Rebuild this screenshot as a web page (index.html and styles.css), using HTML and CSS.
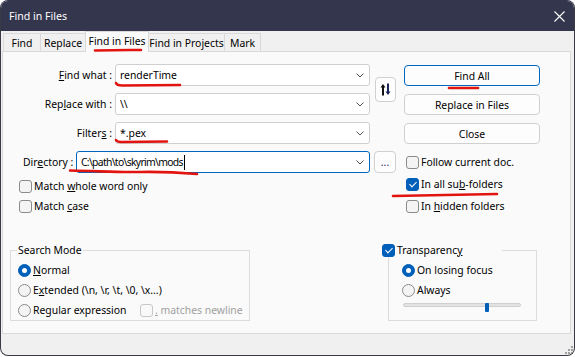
FILE: index.html
```html
<!DOCTYPE html>
<html>
<head>
<meta charset="utf-8">
<link rel="stylesheet" href="styles.css">
</head>
<body>
<div class="window">
  <div class="titlebar">
    <span class="title">Find in Files</span>
    <svg class="close" width="11" height="11" viewBox="0 0 11 11"><path d="M0.5 0.5 L10.5 10.5 M10.5 0.5 L0.5 10.5" stroke="#ffffff" stroke-width="1.1" fill="none"/></svg>
  </div>
  <div class="tabs">
    <div class="tab t-find">Find</div>
    <div class="tab t-replace">Replace</div>
    <div class="tab t-fif active">Find in Files</div>
    <div class="tab t-fip">Find in Projects</div>
    <div class="tab t-mark">Mark</div>
  </div>
  <div class="panel">
    <div class="form">
      <div class="lbl"><span><u>F</u>ind what :</span></div>
      <div class="combo"><span class="val">renderTime</span><svg class="chev" width="8" height="5" viewBox="0 0 8 5"><path d="M0.5 0.5 L4 4 L7.5 0.5" stroke="#505050" fill="none"/></svg></div>
      <button class="swap"><svg width="11" height="13" viewBox="0 0 11 13"><path d="M3 12.5 V2.5" stroke="#111" stroke-width="2" fill="none"/><path d="M0.5 4.5 L3 1 L5.5 4.5 Z" fill="#111"/><path d="M8 0.5 V10.5" stroke="#1b2459" stroke-width="2" fill="none"/><path d="M5.5 8.5 L8 12 L10.5 8.5 Z" fill="#1b2459"/></svg></button>
      <button class="btn default">Find All</button>

      <div class="lbl"><span>Rep<u>l</u>ace with :</span></div>
      <div class="combo"><span class="val">\\</span><svg class="chev" width="8" height="5" viewBox="0 0 8 5"><path d="M0.5 0.5 L4 4 L7.5 0.5" stroke="#505050" fill="none"/></svg></div>
      <button class="btn c4">Replace in Files</button>

      <div class="lbl"><span>Filter<u>s</u> :</span></div>
      <div class="combo"><span class="val">*.pex</span><svg class="chev" width="8" height="5" viewBox="0 0 8 5"><path d="M0.5 0.5 L4 4 L7.5 0.5" stroke="#505050" fill="none"/></svg></div>
      <button class="btn c4">Close</button>

      <div class="dir-row">
        <span class="dir-lbl">Dir<u>e</u>ctory :</span>
        <div class="combo focus"><span class="val path">C:\path\to\skyrim\mods</span><span class="caret"></span><svg class="chev" width="8" height="5" viewBox="0 0 8 5"><path d="M0.5 0.5 L4 4 L7.5 0.5" stroke="#505050" fill="none"/></svg></div>
      </div>
      <button class="dots">...</button>
      <label class="check follow"><span class="box"></span><span class="txt">Follow current doc.</span></label>
    </div>

    <div class="opts">
      <div class="opts-left">
        <label class="check"><span class="box"></span><span class="txt">Match <u>w</u>hole word only</span></label>
        <label class="check"><span class="box"></span><span class="txt">Match <u>c</u>ase</span></label>
      </div>
      <div class="opts-right">
        <label class="check"><span class="box on"></span><span class="txt">In all su<u>b</u>-folders</span></label>
        <label class="check"><span class="box"></span><span class="txt">In <u>h</u>idden folders</span></label>
      </div>
    </div>

    <div class="groups">
      <div class="group mode">
        <div class="group-title">Search Mode</div>
        <div class="group-body">
          <label class="radio"><span class="dot on"></span><span class="txt"><u>N</u>ormal</span></label>
          <label class="radio"><span class="dot"></span><span class="txt">E<u>x</u>tended (\n, \r, \t, \0, \x...)</span></label>
          <div class="radio-row">
            <label class="radio regex"><span class="dot"></span><span class="txt">Re<u>g</u>ular expression</span></label>
            <label class="check disabled"><span class="box"></span><span class="txt"><u>.</u> matches newline</span></label>
          </div>
        </div>
      </div>
      <div class="group trans">
        <div class="group-title trans-title"><label class="check"><span class="box on"></span><span class="txt">Transparenc<u>y</u></span></label></div>
        <div class="group-body trans-body">
          <label class="radio"><span class="dot on"></span><span class="txt">On losing focus</span></label>
          <label class="radio"><span class="dot"></span><span class="txt">Always</span></label>
          <div class="slider"><div class="track"></div><div class="thumb"></div></div>
        </div>
      </div>
    </div>
  </div>
  <div class="footer">
    <svg class="grip" width="10" height="10" viewBox="0 0 10 10"><g fill="#a0a0a0"><rect x="7" y="1" width="2" height="2"/><rect x="7" y="4" width="2" height="2"/><rect x="4" y="4" width="2" height="2"/><rect x="7" y="7" width="2" height="2"/><rect x="4" y="7" width="2" height="2"/><rect x="1" y="7" width="2" height="2"/></g></svg>
  </div>
  <svg class="marks" width="575" height="357" viewBox="0 0 575 357">
    <g stroke="#e2140f" stroke-width="2.6" stroke-linecap="round" fill="none">
      <path d="M95 50.5 Q118 49.8 141 50"/>
      <path d="M116 83 Q117 85.5 122 85.5 L180 85"/>
      <path d="M116 140 Q117 142 121 142 L167 141.5"/>
      <path d="M70 170.5 C100 171 115 172.5 140 172 S185 173 197 174"/>
      <path d="M449 88 L478 88"/>
      <path d="M393 196 Q440 195 497 194"/>
    </g>
  </svg>
</div>
</body>
</html>
```

FILE: styles.css
```css
* { box-sizing: border-box; }
html, body { margin: 0; padding: 0; }
body {
  width: 575px;
  height: 357px;
  background: #ffffff;
  font-family: "Noto Sans", "Open Sans", sans-serif;
  font-size: 10.4px;
  color: #000;
  overflow: hidden;
}
u { text-underline-offset: 1px; text-decoration-thickness: 1px; }
button { font: inherit; color: inherit; margin: 0; padding: 0; }
.txt { white-space: pre; }

.window {
  position: relative;
  width: 575px;
  height: 356px;
  border: 1px solid #3a3a44;
  border-top-color: #34364d;
  border-radius: 8px;
  overflow: hidden;
  background: #f0f0f0;
  display: flex;
  flex-direction: column;
}
.titlebar {
  height: 30px;
  flex: none;
  background: #34364d;
  color: #fff;
  display: flex;
  align-items: center;
  justify-content: space-between;
  padding: 0 9px 0 8px;
}
.title { line-height: 16px; font-size: 10.6px; }
.close { display: block; }

.tabs {
  height: 20px;
  flex: none;
  display: flex;
  align-items: flex-end;
  padding-left: 2px;
}
.tab {
  height: 18px;
  border: 1px solid #d9d9d9;
  border-bottom: none;
  background: #f0f0f0;
  margin-right: -1px;
  text-align: center;
  line-height: 18px;
  white-space: nowrap;
}
.t-find { width: 38px; }
.t-replace { width: 46px; }
.t-fif { width: 64px; }
.t-fip { width: 77px; }
.t-mark { width: 37px; }
.tab.active {
  height: 21px;
  margin-bottom: -1px;
  background: #fafafa;
  position: relative;
  z-index: 1;
  line-height: 18px;
}

.panel {
  flex: none;
  margin-left: 1px;
  width: 569px;
  height: 283px;
  border: 1px solid #d9d9d9;
  background: #fafafa;
}

.form {
  display: grid;
  grid-template-columns: 112px 255px 34px 136px;
  grid-auto-rows: 22px;
  row-gap: 7px;
  margin-top: 12px;
}
.lbl {
  display: flex;
  align-items: center;
  justify-content: flex-end;
  padding-right: 3px;
  white-space: pre;
}
.combo {
  display: flex;
  align-items: center;
  height: 22px;
  background: #fff;
  border: 1px solid #cfcfcf;
  border-radius: 3px;
  padding: 0 5px 0 4px;
}
.combo .val { flex: 1; white-space: nowrap; }
.combo.focus { border-color: #0067c0; }
.combo.focus .val { flex: none; }
.val.path { letter-spacing: -0.7px; }
.caret { width: 1px; height: 15px; background: #000; margin-left: 1px; }
.combo.focus .chev { margin-left: auto; }
.chev { display: block; flex: none; }

.swap {
  grid-column: 3;
  grid-row: 1 / 3;
  align-self: center;
  justify-self: start;
  margin-left: 5px;
  width: 21px;
  height: 25px;
  background: #fdfdfd;
  border: 1px solid #d0d0d0;
  border-radius: 4px;
  display: flex;
  align-items: center;
  justify-content: center;
}
.swap svg { display: block; }
.btn {
  grid-column: 4;
  height: 21px;
  margin-top: 1px;
  background: #fdfdfd;
  border: 1px solid #d0d0d0;
  border-radius: 4px;
  line-height: 18px;
}
.btn.default { border-color: #0067c0; }

.dir-row {
  grid-column: 1 / 3;
  display: flex;
  align-items: center;
  padding-left: 20px;
}
.dir-lbl { width: 53px; white-space: pre; }
.dir-row .combo { flex: 1; }
.dots {
  grid-column: 3;
  margin-left: 4px;
  width: 22px;
  height: 22px;
  background: #fdfdfd;
  border: 1px solid #d0d0d0;
  border-radius: 4px;
  color: #2a1f6e;
  line-height: 18px;
}
.follow { grid-column: 4; padding-left: 2px; }

.check, .radio {
  display: flex;
  align-items: center;
  white-space: nowrap;
}
.box {
  position: relative;
  flex: none;
  width: 13px;
  height: 13px;
  border: 1px solid #8b8b8b;
  border-radius: 3px;
  background: #f4f4f4;
  margin-right: 2px;
}
.box.on { background: #005fb8; border-color: #005fb8; }
.box.on::after {
  content: "";
  position: absolute;
  left: 3.5px;
  top: 1.5px;
  width: 3px;
  height: 6px;
  border-right: 1px solid #fff;
  border-bottom: 1px solid #fff;
  transform: rotate(45deg);
}
.dot {
  position: relative;
  flex: none;
  width: 13px;
  height: 13px;
  border: 1px solid #8b8b8b;
  border-radius: 50%;
  background: #f4f4f4;
  margin-right: 2px;
}
.dot.on { background: #005fb8; border-color: #005fb8; }
.dot.on::after {
  content: "";
  position: absolute;
  left: 3px;
  top: 3px;
  width: 5px;
  height: 5px;
  border-radius: 50%;
  background: #fff;
}

.opts { display: flex; }
.opts-left { width: 403px; padding: 3px 0 0 16px; }
.opts-left .check { height: 20px; }
.opts-right .check { height: 22px; }

.groups {
  display: flex;
  margin-top: 26px;
}
.group {
  height: 71px;
  border: 1px solid #dcdcdc;
  margin-top: 7px;
}
.group-title {
  width: fit-content;
  margin: -8px 0 0 6px;
  padding: 0 1px;
  line-height: 14px;
  height: 14px;
  background: #fafafa;
}
.mode { width: 240px; margin-left: 7px; }
.group-body { padding: 3px 0 0 7px; }
.group-body .radio { height: 20px; }
.radio-row { display: flex; }
.radio-row .radio.regex { width: 122px; }
.check.disabled { color: #a0a0a0; }
.check.disabled .box { border-color: #c8c8c8; background: #f9f9f9; }

.trans { width: 149px; margin-left: 138px; }
.trans-title { width: 120px; margin-left: -7px; padding: 0; }
.trans-body { padding-left: 13px; }
.slider {
  position: relative;
  width: 118px;
  height: 10px;
  margin: 2px 0 0 1px;
}
.track {
  margin-top: 3px;
  height: 4px;
  background: #e3e3e3;
  border: 1px solid #cfcfcf;
  border-radius: 2px;
}
.thumb {
  position: absolute;
  left: 82px;
  top: 0;
  width: 4px;
  height: 9px;
  background: #005fb8;
  border-radius: 1px;
}

.footer {
  flex: 1;
  display: flex;
  align-items: flex-end;
  justify-content: flex-end;
}
.grip { display: block; }

.marks {
  position: absolute;
  left: -1px;
  top: -1px;
  pointer-events: none;
  z-index: 5;
}
```
